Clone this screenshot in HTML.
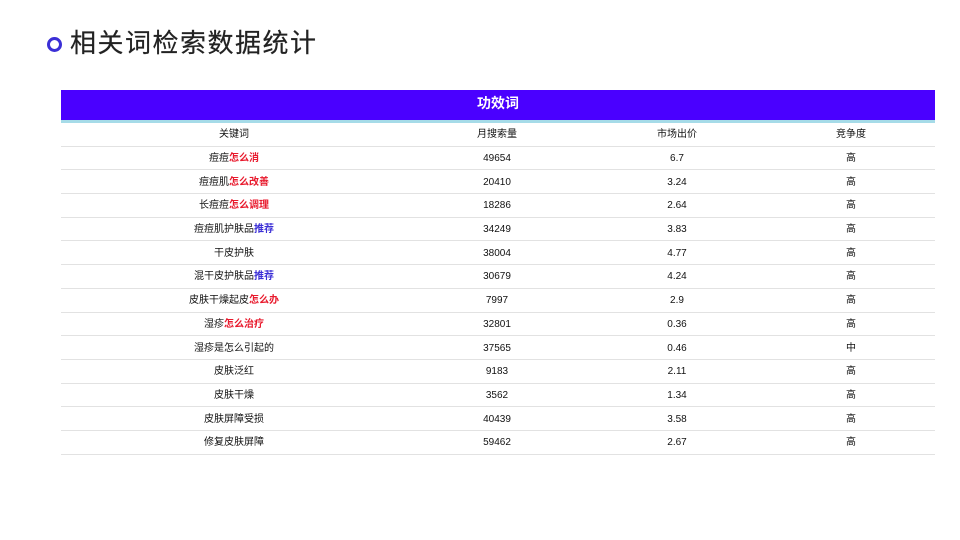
<!DOCTYPE html>
<html><head><meta charset="utf-8"><style>
body{margin:0;width:960px;height:540px;background:#fff;font-family:"Liberation Sans","Noto Sans CJK SC",sans-serif;position:relative;overflow:hidden}
.dot{position:absolute;left:47px;top:37px;width:9px;height:9px;border:3px solid #3b2fd6;border-radius:50%}
.title{position:absolute;left:70px;top:27px;font-size:26px;color:#222;letter-spacing:1.5px;line-height:32px;-webkit-text-stroke:0.2px #222}
.bar{position:absolute;left:61px;top:90px;width:874px;height:30px;background:#4a00ff;color:#fff;font-weight:bold;font-size:14px;text-align:center;line-height:27px}
.cy{position:absolute;left:61px;top:120px;width:874px;height:3px;background:#a6dbe8}
table{position:absolute;left:61px;top:123px;width:874px;border-collapse:collapse;font-size:10px;color:#111}
td{height:20.7px;line-height:14px;padding:2px 0 0 0;text-align:center;vertical-align:middle;border-bottom:1px solid #e2e2e2}
.r{color:#e8192c;font-weight:bold}.b{color:#3b2fd6;font-weight:bold}
</style></head><body>
<div class="dot"></div>
<div class="title">相关词检索数据统计</div>
<div class="bar">功效词</div>
<div class="cy"></div>
<table>
<colgroup><col style="width:346px"><col style="width:180px"><col style="width:180px"><col style="width:168px"></colgroup>
<tr><td>关键词</td><td>月搜索量</td><td>市场出价</td><td>竞争度</td></tr>
<tr><td>痘痘<span class="r">怎么消</span></td><td>49654</td><td>6.7</td><td>高</td></tr>
<tr><td>痘痘肌<span class="r">怎么改善</span></td><td>20410</td><td>3.24</td><td>高</td></tr>
<tr><td>长痘痘<span class="r">怎么调理</span></td><td>18286</td><td>2.64</td><td>高</td></tr>
<tr><td>痘痘肌护肤品<span class="b">推荐</span></td><td>34249</td><td>3.83</td><td>高</td></tr>
<tr><td>干皮护肤</td><td>38004</td><td>4.77</td><td>高</td></tr>
<tr><td>混干皮护肤品<span class="b">推荐</span></td><td>30679</td><td>4.24</td><td>高</td></tr>
<tr><td>皮肤干燥起皮<span class="r">怎么办</span></td><td>7997</td><td>2.9</td><td>高</td></tr>
<tr><td>湿疹<span class="r">怎么治疗</span></td><td>32801</td><td>0.36</td><td>高</td></tr>
<tr><td>湿疹是怎么引起的</td><td>37565</td><td>0.46</td><td>中</td></tr>
<tr><td>皮肤泛红</td><td>9183</td><td>2.11</td><td>高</td></tr>
<tr><td>皮肤干燥</td><td>3562</td><td>1.34</td><td>高</td></tr>
<tr><td>皮肤屏障受损</td><td>40439</td><td>3.58</td><td>高</td></tr>
<tr><td>修复皮肤屏障</td><td>59462</td><td>2.67</td><td>高</td></tr>
</table>
</body></html>
